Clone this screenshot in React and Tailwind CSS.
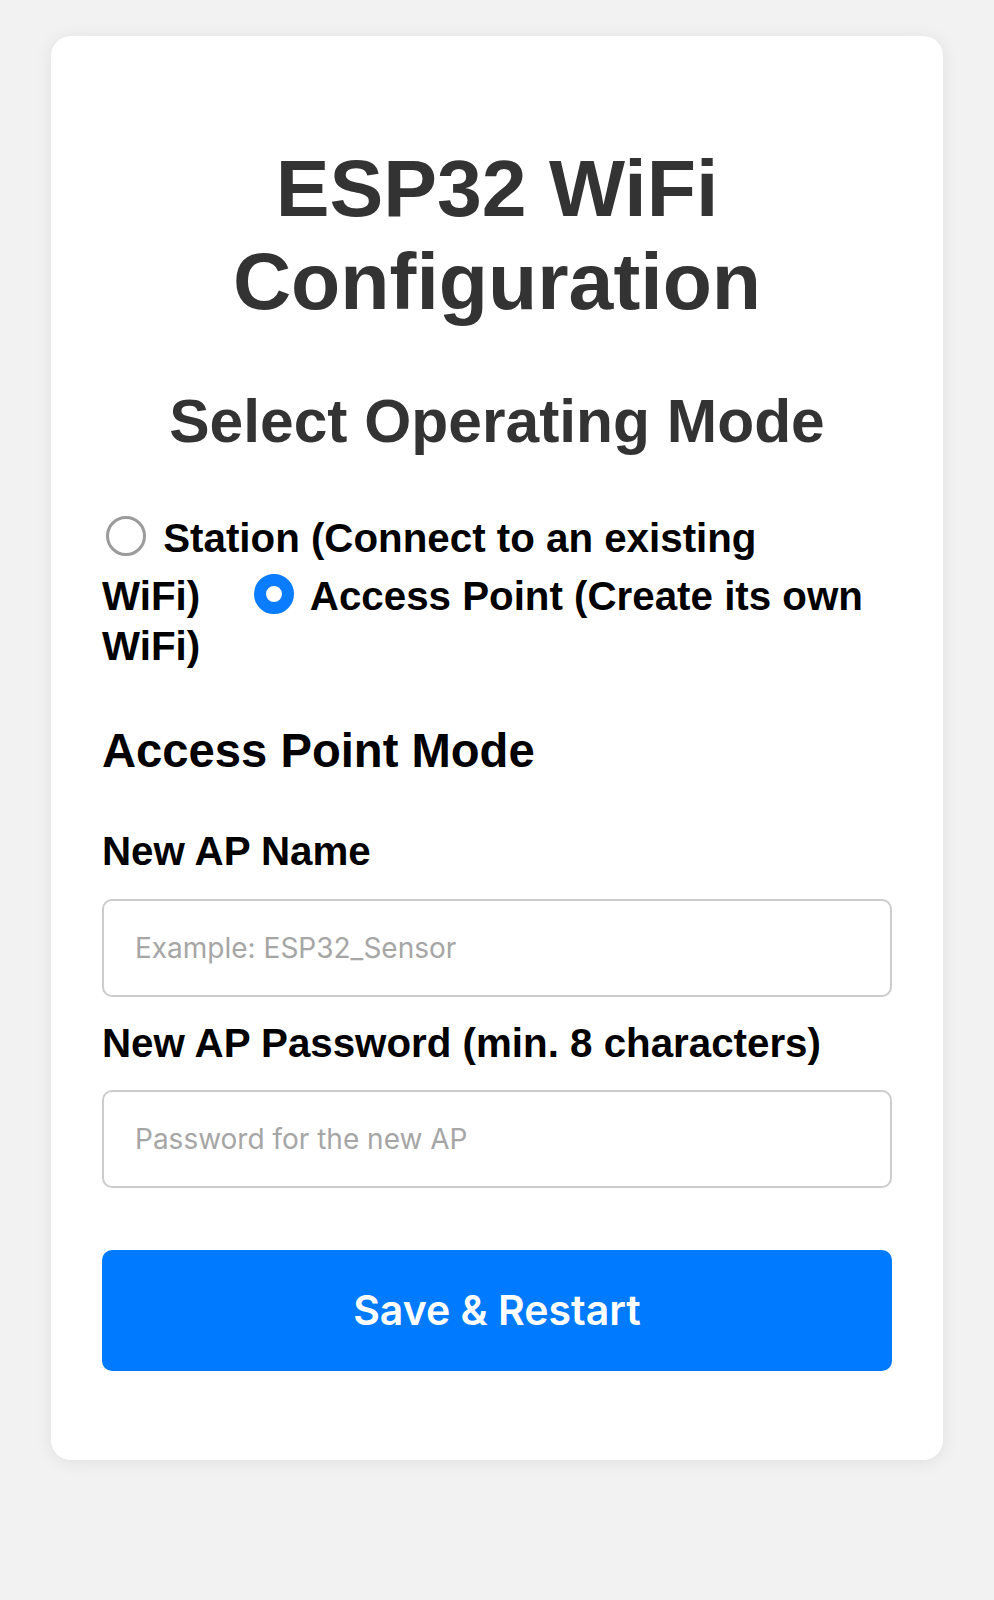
import React from 'react';

const Radio = ({ checked, className = '' }) => (
    <span
        className={
            checked
                ? `inline-block w-[40px] h-[40px] mt-[10px] mr-[6px] align-[-4px] rounded-full bg-white border-[12px] border-[#0a7cff] ${className}`
                : `inline-block w-[40px] h-[40px] mt-[10px] mr-[6px] align-[-4px] rounded-full bg-white border-[3px] border-[#9b9b9b] ${className}`
        }
    />
);

const Field = ({ label, placeholder, type = 'text', first }) => (
    <>
        <label className={`block ${first ? 'mt-[51px]' : 'mt-[24px]'} text-[40.3px] leading-[1.15] font-bold text-black`}>
            {label}
        </label>
        <input
            type={type}
            placeholder={placeholder}
            className="block w-full h-[98px] mt-[23px] px-[31px] border-2 border-[#cccccc] rounded-[10px] bg-white text-[28px] font-['Inter',sans-serif] text-black placeholder:text-[#a6a6a6] outline-none"
        />
    </>
);

export default function App() {
    return (
        <div className="min-h-screen bg-[#f2f2f2] px-[51px] pt-[36px] font-['Liberation_Sans',Arial,sans-serif]">
            <div className="bg-white rounded-[20px] shadow-[0_2px_18px_rgba(0,0,0,0.08)] px-[51px] pt-[51px] pb-[89px]">
                <h1 className="mt-[55px] text-center text-[80.6px] leading-[1.15] font-bold text-[#333333]">
                    ESP32 WiFi Configuration
                </h1>
                <h2 className="mt-[60px] text-center text-[60.5px] leading-[1.15] font-bold text-[#333333]">
                    Select Operating Mode
                </h2>

                {/* mode radios, inline flow like the original form */}
                <div className="mt-[49px] text-[40.3px] leading-[50px] font-bold text-black">
                    <Radio className="ml-[4px]" /> Station (Connect to an existing{' '}
                    <span className="whitespace-nowrap">
                        WiFi)<Radio checked className="ml-[54px]" />
                    </span>{' '}
                    Access Point (Create its own WiFi)
                </div>

                <h3 className="mt-[52px] text-[47.2px] leading-[1.15] font-bold text-black">
                    Access Point Mode
                </h3>

                <Field first label="New AP Name" placeholder="Example: ESP32_Sensor" />
                <Field label="New AP Password (min. 8 characters)" placeholder="Password for the new AP" type="password" />

                <button className="block w-full h-[121px] mt-[62px] rounded-[10px] bg-[#007bff] text-white text-[41px] font-semibold font-['Inter',sans-serif]">
                    Save &amp; Restart
                </button>
            </div>
        </div>
    );
}
